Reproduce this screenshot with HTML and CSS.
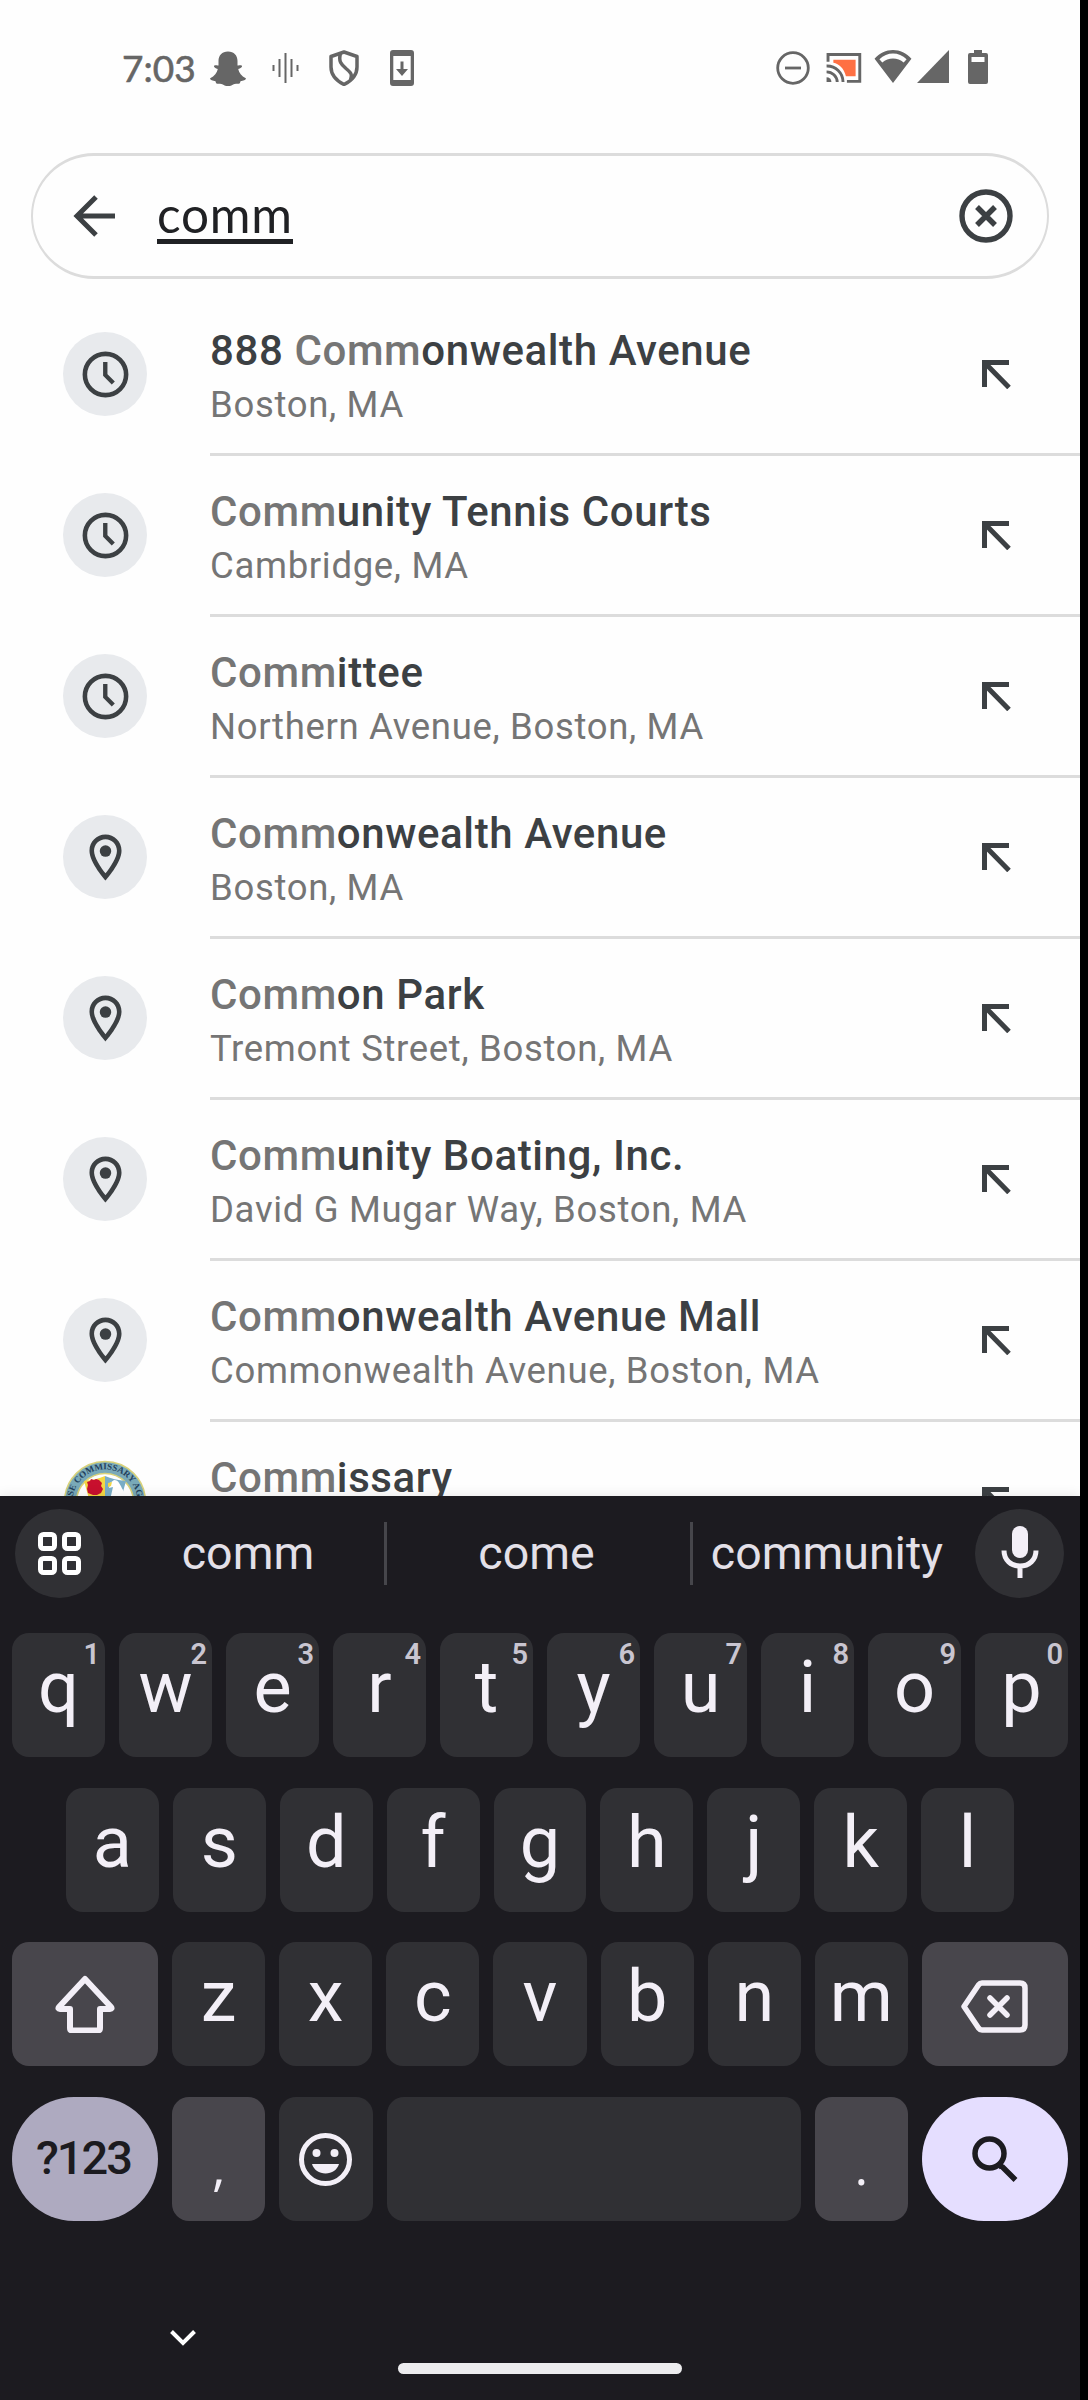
FILE: index.html
```html
<!DOCTYPE html>
<html lang="en">
<head>
<meta charset="utf-8">
<title>Search</title>
<link rel="stylesheet" href="styles.css">
</head>
<body>
<svg class="defs" width="0" height="0">
  <symbol id="clock" viewBox="0 0 24 24"><circle cx="12" cy="12" r="9" fill="none" stroke="currentColor" stroke-width="2"/><path d="M11.9 6.500v5.700l3.500 3.500" fill="none" stroke="currentColor" stroke-width="1.900"/></symbol>
  <symbol id="pin" viewBox="0 0 24 24"><path fill="currentColor" d="M12 2C8.13 2 5 5.13 5 9c0 5.25 7 13 7 13s7-7.75 7-13c0-3.87-3.13-7-7-7zM7 9c0-2.76 2.24-5 5-5s5 2.24 5 5c0 2.88-2.88 7.19-5 9.88C9.92 16.21 7 11.85 7 9z"/><circle cx="12" cy="9.2" r="2.5" fill="currentColor"/></symbol>
  <symbol id="fill-in" viewBox="0 0 29 29"><path fill="none" stroke="currentColor" stroke-width="5" d="M27 2.5H2.500V27M3 3L27 27.500"/></symbol>
</svg>
<div class="phone">
  <header class="status">
    <span class="time">7:03</span>
    <svg class="ic snap" viewBox="0 0 36 36"><path d="M18 0.500c6 0 9.500 4 9.500 9.500v4.500c1.500.3 3.200-.7 4.300.2.900 1-.8 2.600-3.600 3.400.8 3.800 3.300 7.300 7.600 9.100.8 1.700-2.200 2.400-5.300 3-.5 1.200-.4 2.400-1.800 2.500-2 .1-3.600-.5-5.600.7-1.700 1-2.800 1.700-5.100 1.700s-3.400-.7-5.100-1.700c-2-1.200-3.600-.6-5.600-.7-1.400-.1-1.300-1.300-1.800-2.500-3.100-.6-6.100-1.300-5.300-3 4.300-1.800 6.800-5.300 7.600-9.100-2.800-.8-4.500-2.400-3.600-3.400 1.100-.9 2.800.1 4.300-.2V10C8.500 4.500 12 .5 18 .5z"/></svg>
    <svg class="ic wave" viewBox="0 0 28 30"><path d="M1.500 12v6M7.500 6v18M13.500 0v30M19.500 6v18M25.500 12v6"/></svg>
    <svg class="ic shield" viewBox="0 0 30 36"><path d="M15 2L28 6.500V17c0 8-5 13.500-13 17.500C7 30.500 2 25 2 17V6.500zM11.500 3.500C9 12 13 15 17 18.500c5 4 6.500 6 4.500 11"/></svg>
    <svg class="ic update" viewBox="0 0 24 36"><path fill-rule="evenodd" d="M3 0h18a3 3 0 013 3v30a3 3 0 01-3 3H3a3 3 0 01-3-3V3a3 3 0 013-3zM3.300 6v24h17.400V6zM10.500 11.500h3V19H18l-6 7-6-7h4.500z"/></svg>
    <span class="grow"></span>
    <svg class="ic dnd" viewBox="0 0 34 34"><circle cx="17" cy="17" r="15.300"/><path d="M9 17h16"/></svg>
    <svg class="ic cast" viewBox="0 0 36 31"><path class="screen" d="M7 7h23v17H20C18 16 13 11 7 10z"/><path class="line" d="M1.500 9V1.500h32.800v27.800H21M0 13.500A16.500 16.500 0 0117 30M0 19.500A11 11 0 0111 30"/><path class="dot" d="M0 25a5 5 0 015 5H0z"/></svg>
    <svg class="ic wifi" viewBox="0 0 38 34"><path fill-rule="evenodd" d="M19 0C26 0 33 3.500 38 9L19 34 0 9C5 3.500 12 0 19 0zM5 9.500l3 3.500c6-5.500 16-5.500 22 0l3-3.500C25 1.500 13 1.500 5 9.500z"/></svg>
    <svg class="ic cell" viewBox="0 0 32 33"><path d="M32 0v33H0z"/></svg>
    <svg class="ic batt" viewBox="0 0 20 34"><path fill-rule="evenodd" d="M6 0h8v3h4a2 2 0 012 2v27a2 2 0 01-2 2H2a2 2 0 01-2-2V5a2 2 0 012-2h4zM3.500 7v5h13V7z"/></svg>
  </header>

  <div class="search">
    <svg class="back" viewBox="0 0 42 42"><path d="M42 21H4M23 2L4 21l19 19"/></svg>
    <span class="query">comm</span>
    <svg class="clear" viewBox="0 0 54 54"><circle cx="27" cy="27" r="24"/><path d="M18 18l18 18M36 18L18 36"/></svg>
  </div>

  <ul class="results">
    <li class="row"><span class="badge"><svg><use href="#clock"/></svg></span><div class="body"><div class="text"><p class="title">888 <i>Comm</i>onwealth Avenue</p><p class="sub">Boston, MA</p></div><svg class="fill"><use href="#fill-in"/></svg></div></li>
    <li class="row"><span class="badge"><svg><use href="#clock"/></svg></span><div class="body"><div class="text"><p class="title"><i>Comm</i>unity Tennis Courts</p><p class="sub">Cambridge, MA</p></div><svg class="fill"><use href="#fill-in"/></svg></div></li>
    <li class="row"><span class="badge"><svg><use href="#clock"/></svg></span><div class="body"><div class="text"><p class="title"><i>Comm</i>ittee</p><p class="sub">Northern Avenue, Boston, MA</p></div><svg class="fill"><use href="#fill-in"/></svg></div></li>
    <li class="row"><span class="badge"><svg><use href="#pin"/></svg></span><div class="body"><div class="text"><p class="title"><i>Comm</i>onwealth Avenue</p><p class="sub">Boston, MA</p></div><svg class="fill"><use href="#fill-in"/></svg></div></li>
    <li class="row"><span class="badge"><svg><use href="#pin"/></svg></span><div class="body"><div class="text"><p class="title"><i>Comm</i>on Park</p><p class="sub">Tremont Street, Boston, MA</p></div><svg class="fill"><use href="#fill-in"/></svg></div></li>
    <li class="row"><span class="badge"><svg><use href="#pin"/></svg></span><div class="body"><div class="text"><p class="title"><i>Comm</i>unity Boating, Inc.</p><p class="sub">David G Mugar Way, Boston, MA</p></div><svg class="fill"><use href="#fill-in"/></svg></div></li>
    <li class="row"><span class="badge"><svg><use href="#pin"/></svg></span><div class="body"><div class="text"><p class="title"><i>Comm</i>onwealth Avenue Mall</p><p class="sub">Commonwealth Avenue, Boston, MA</p></div><svg class="fill"><use href="#fill-in"/></svg></div></li>
    <li class="row"><span class="badge seal"><svg viewBox="0 0 84 84">
      <circle cx="42" cy="43" r="40.500" fill="#79a9b8" stroke="#d9d27a" stroke-width="1.500"/>
      <circle cx="42" cy="43" r="28.500" fill="#fff" stroke="#d9d27a" stroke-width="1.500"/>
      <path d="M21 22q12-1 21-5v30H28z" fill="#f3d743"/><path d="M63 22q-12-1-21-5v30h14z" fill="#79adc6"/>
      <path d="M33 20l3 1 3 3-1 3 2 3-2 4-4 2h-4l-5-2-1-4 1-4-1-3 3-1 1-2 3 1z" fill="#c8102e"/>
      <path d="M47 24l4-3c5 0 6 5 9 10v10H47l3-13-4 1z" fill="#fff"/><path d="M45 24l4-1-1 4-3 1z" fill="#f3d743"/>
      <path id="ring" d="M12.500 56.500A32.500 32.500 0 1171.500 56.500" fill="none"/>
      <text class="seal-text"><textPath href="#ring" startOffset="50%" text-anchor="middle">NSE COMMISSARY AGE</textPath></text></svg></span><div class="body"><div class="text"><p class="title"><i>Comm</i>issary</p><p class="sub">&nbsp;</p></div><svg class="fill"><use href="#fill-in"/></svg></div></li>
  </ul>

  <section class="keyboard">
    <div class="strip">
      <span class="round"><svg class="apps" viewBox="0 0 43 43"><rect x="2.500" y="2.500" width="14" height="14" rx="3"/><rect x="26.500" y="2.500" width="14" height="14" rx="3"/><rect x="2.500" y="26.500" width="14" height="14" rx="3"/><rect x="26.500" y="26.500" width="14" height="14" rx="3"/></svg></span>
      <span class="word w1">comm</span><span class="word w2">come</span><span class="word w3">community</span>
      <span class="round"><svg class="mic" viewBox="0 0 38 52"><rect x="11" y="0" width="16" height="32" rx="8"/><path d="M3 24.500C3 34 10 40 19 40s16-6 16-15.500M19 40v12"/></svg></span>
    </div>
    <div class="keys">
      <span class="key">q<sup>1</sup></span><span class="key">w<sup>2</sup></span><span class="key">e<sup>3</sup></span><span class="key">r<sup>4</sup></span><span class="key">t<sup>5</sup></span><span class="key">y<sup>6</sup></span><span class="key">u<sup>7</sup></span><span class="key">i<sup>8</sup></span><span class="key">o<sup>9</sup></span><span class="key">p<sup>0</sup></span>
    </div>
    <div class="keys inset">
      <span class="key">a</span><span class="key">s</span><span class="key">d</span><span class="key">f</span><span class="key">g</span><span class="key">h</span><span class="key">j</span><span class="key">k</span><span class="key">l</span>
    </div>
    <div class="keys">
      <span class="key wide mod"><svg class="shift" viewBox="0 0 60 58"><path d="M30 4L56 32q1.500 2-1 2H45v19q0 2.500-2.500 2.500h-25Q15 55.500 15 53V34H5q-2.500 0-1-2z"/></svg></span>
      <span class="key">z</span><span class="key">x</span><span class="key">c</span><span class="key">v</span><span class="key">b</span><span class="key">n</span><span class="key">m</span>
      <span class="key wide mod"><svg class="del" viewBox="0 0 67 53"><path d="M21 3h38q5 0 5 5v37q0 5-5 5H21q-2 0-3.500-2L3 26.500 17.500 5Q19 3 21 3z"/><path d="M29 18l17 17M46 18L29 35"/></svg></span>
    </div>
    <div class="keys">
      <span class="key wide sym">?123</span><span class="key mod punct">,</span>
      <span class="key"><svg class="smile" viewBox="0 0 53 53"><circle class="o" cx="26.500" cy="26.500" r="24"/><circle cx="17.500" cy="20" r="4"/><circle cx="35.500" cy="20" r="4"/><path d="M13 31h27c-2 6-7 9.500-13.500 9.500S15 37 13 31z"/></svg></span>
      <span class="key space"></span><span class="key mod punct">.</span>
      <span class="key wide go"><svg class="lens" viewBox="0 0 46 46"><circle cx="17.500" cy="17.500" r="14.500"/><path d="M28 28l2 4M30 30.500L43.500 44"/></svg></span>
    </div>
    <div class="nav"><svg class="chev" viewBox="0 0 26 16"><path d="M1.500 1.500L13 13 24.500 1.500"/></svg><span class="pill"></span></div>
  </section>
</div>
</body>
</html>
```
FILE: styles.css
```css
* { box-sizing: border-box; margin: 0; padding: 0; }
body { background: #000; font-family: Roboto, "Liberation Sans", sans-serif; width: 1088px; height: 2400px; overflow: hidden; }
.defs { display: block; }
.phone { width: 1080px; height: 2400px; background: #fefefe; display: flex; flex-direction: column; overflow: hidden; }

.status { height: 153px; flex: none; padding: 50px 92px 0 122px; display: flex; align-items: flex-start; color: #666; }
.grow { flex: 1; }
.time { font: 400 37px/35px Lato, sans-serif; width: 88px; -webkit-text-stroke: .6px #666; }
.ic { flex: none; fill: #666; }
.snap { width: 36px; height: 36px; margin-top: 1px; }
.wave { width: 28px; height: 30px; margin: 3px 0 0 26px; stroke: #666; stroke-width: 2; }
.shield { width: 30px; height: 36px; margin: 0 0 0 29px; }
.shield path { fill: none; stroke: #666; stroke-width: 3.5; stroke-linejoin: round; }
.update { width: 24px; height: 36px; margin-left: 31px; }
.dnd { width: 34px; height: 34px; margin-top: 1px; fill: none; stroke: #666; stroke-width: 2.8; }
.cast { width: 36px; height: 30px; margin: 3px 0 0 16px; }
.cast .line { fill: none; stroke: #666; stroke-width: 3; }
.cast .screen { fill: #ff7043; }
.wifi { width: 38px; height: 33px; margin-left: 12px; }
.cell { width: 32px; height: 33px; margin-left: 5px; }
.batt { width: 20px; height: 34px; margin-left: 19px; }

.search { flex: none; width: 1018px; height: 126px; margin-left: 31px; border: 3px solid #dcdcdc; border-left-width: 2px; border-right-width: 2px; border-radius: 63px; display: flex; align-items: center; padding: 0 34px 0 40px; }
.back { width: 42px; height: 42px; fill: none; stroke: #3c4043; stroke-width: 5; }
.query { margin: 0 auto 0 42px; height: 56px; font: 400 49.5px/53px Lato, Roboto, sans-serif; letter-spacing: .8px; color: #202124; border-bottom: 5px solid #202124; }
.clear { width: 54px; height: 54px; fill: none; stroke: #3c4043; stroke-width: 5.4; }

.results { list-style: none; margin-top: 16px; height: 1201px; flex: none; overflow: hidden; }
.row { height: 161px; display: flex; }
.badge { width: 84px; height: 84px; margin: 37px 63px 0; border-radius: 50%; background: #e8eaed; color: #3c4043; display: flex; align-items: center; justify-content: center; flex: none; }
.badge svg { width: 55px; height: 55px; }
.badge.seal { background: none; }
.badge.seal svg { width: 84px; height: 84px; }
.seal-text { font: 700 9px "Liberation Serif", serif; fill: #23405c; }
.body { flex: 1; border-bottom: 3px solid #dcdcdc; display: flex; justify-content: space-between; padding: 30px 69px 0 0; }
.title { font-size: 42px; line-height: 52px; font-weight: 500; letter-spacing: .6px; color: #3c4043; white-space: nowrap; }
.title i { font-style: normal; color: #757575; }
.sub { font-size: 36.500px; line-height: 55px; letter-spacing: .67px; color: #757575; white-space: nowrap; }
.fill { width: 29px; height: 29px; margin-top: 35px; color: #3c4043; }

.keyboard { position: relative; height: 904px; flex: none; background: #1c1b20; padding: 13px 12px 0; box-shadow: 0 0 12px rgba(0, 0, 0, .1); }
.strip { display: flex; align-items: center; height: 89px; padding: 0 4px 0 3px; margin-bottom: 35px; }
.round { width: 89px; height: 89px; border-radius: 50%; background: #303034; display: flex; align-items: center; justify-content: center; flex: none; }
.apps { width: 43px; height: 43px; fill: none; stroke: #fff; stroke-width: 5; }
.mic { width: 38px; height: 52px; fill: #f3eff7; margin-bottom: 3px; }
.mic path { fill: none; stroke: #f3eff7; stroke-width: 5; }
.word { color: #e3e0e8; font-size: 46.500px; line-height: 63px; height: 63px; text-align: center; }
.w1 { width: 283px; padding-left: 8px; border-right: 3px solid #46464b; }
.w2 { width: 306px; padding-right: 4px; border-right: 3px solid #46464b; }
.w3 { width: 282px; padding-right: 14px; }
.keys { display: flex; gap: 14px; height: 124px; margin-bottom: 30.700px; }
.inset { padding: 0 54px; }
.key { position: relative; flex: 1 1 0; background: #303034; border-radius: 17px; color: #f3eff7; font-size: 72px; line-height: 109px; text-align: center; display: flex; justify-content: center; }
.key sup { position: absolute; top: 3px; right: 5px; font-size: 29px; line-height: 36px; font-weight: 600; color: #c9c5d0; }
.key svg { align-self: center; fill: none; stroke: #f3eff7; stroke-width: 6; }
.wide { flex: none; width: 146px; }
.mod { background: #48464c; }
.shift { width: 60px; height: 58px; stroke-linejoin: round; }
.key .del { width: 67px; height: 53px; margin-top: 5px; stroke-width: 5.5; stroke-linecap: round; stroke-linejoin: round; }
.sym { border-radius: 62px; background: #aeaac0; color: #1c1b20; font-size: 47px; font-weight: 500; line-height: 121px; letter-spacing: -2px; padding-right: 3px; }
.go { border-radius: 62px; background: #e5deff; }
.key .lens { width: 46px; height: 46px; stroke: #1c1b20; stroke-width: 5.5; }
.punct { font-family: "Open Sans", sans-serif; font-size: 52px; line-height: 136px; }
.space { flex: none; width: 414px; }
.key .smile { width: 53px; height: 53px; fill: #f3eff7; stroke: none; }
.key .smile .o { fill: none; stroke: #f3eff7; stroke-width: 5; }
.nav { display: flex; padding: 75px 0 0 158px; align-items: flex-start; }
.chev { width: 26px; height: 16px; margin-top: 3px; fill: none; stroke: #fff; stroke-width: 4; }
.pill { width: 284px; height: 11px; border-radius: 6px; background: #ececee; margin: 36px 0 0 202px; }
```
